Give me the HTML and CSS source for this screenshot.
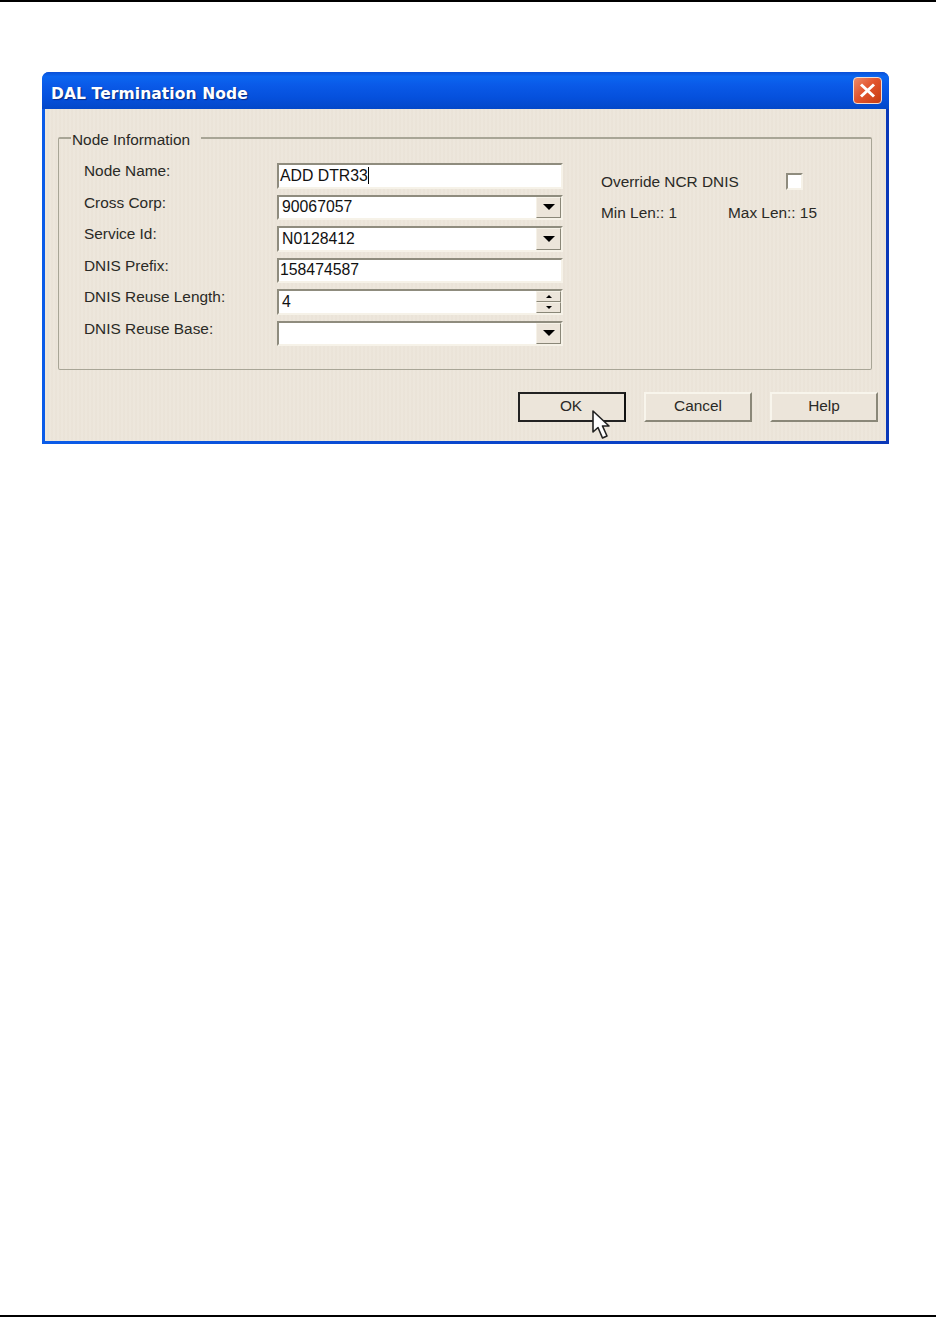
FILE: index.html
```html
<!DOCTYPE html>
<html lang="en">
  <head>
    <meta charset="UTF-8" />
    <title>DAL Termination Node</title>
    <link rel="stylesheet" href="styles.css">
  </head>
  <body>
    <div class="page">
      <div class="dialog">
        <div class="titlebar">
          <span class="title">DAL Termination Node</span>
          <span class="close">
            <svg width="17" height="15" viewBox="0 0 17 15">
              <path d="M2 1.5 L15 13.5 M15 1.5 L2 13.5" stroke="#fff" stroke-width="3" fill="none" />
            </svg>
          </span>
        </div>
        <div class="content">
          <fieldset class="group">
            <legend>Node Information</legend>
            <div class="columns">
              <div class="form">
                <div class="label">Node Name:</div>
                <div class="field">ADD DTR33<span class="caret"></span></div>

                <div class="label">Cross Corp:</div>
                <div class="field combo">90067057<span class="drop"><i class="arrow"></i></span></div>

                <div class="label">Service Id:</div>
                <div class="field combo">N0128412<span class="drop"><i class="arrow"></i></span></div>

                <div class="label">DNIS Prefix:</div>
                <div class="field">158474587</div>

                <div class="label">DNIS Reuse Length:</div>
                <div class="field combo">4
                  <span class="spin">
                    <span class="spin-btn"><i class="arrow-up"></i></span>
                    <span class="spin-btn"><i class="arrow-down"></i></span>
                  </span>
                </div>

                <div class="label">DNIS Reuse Base:</div>
                <div class="field combo"><span class="drop"><i class="arrow"></i></span></div>
              </div>
              <div class="side">
                <div class="side-row">
                  <span class="override">Override NCR DNIS</span>
                  <span class="check"></span>
                </div>
                <div class="side-row lens">
                  <span class="min-len">Min Len:: 1</span>
                  <span>Max Len:: 15</span>
                </div>
              </div>
            </div>
          </fieldset>
          <div class="buttons">
            <div class="btn default">OK</div>
            <div class="btn">Cancel</div>
            <div class="btn">Help</div>
          </div>
          <svg class="cursor" width="20" height="30" viewBox="0 0 20 30">
            <path d="M1 1 V22 L6 17.5 L10.5 28 L15 26 L10.5 16 L17 16 Z" fill="#fff" stroke="#222" stroke-width="1.6" stroke-linejoin="round" />
          </svg>
        </div>
      </div>
    </div>
  </body>
</html>
```

FILE: styles.css
```css
* {
  box-sizing: border-box;
  margin: 0;
  padding: 0;
}

body {
  font-family: "Liberation Sans", Arial, sans-serif;
  background-color: #fff;
  color: #2a2a26;
}

.page {
  height: 1317px;
  border-top: 2px solid #000;
  border-bottom: 2px solid #000;
  padding: 70px 47px 0 42px;
}

.dialog {
  height: 372px;
  display: flex;
  flex-direction: column;
  border-radius: 7px 7px 0 0;
  overflow: hidden;
  background: linear-gradient(to right, #0b5ce8 0%, #0a46cc 50%, #0a38b8 100%);
}

.titlebar {
  height: 37px;
  flex: none;
  display: flex;
  align-items: center;
  justify-content: space-between;
  padding: 0 7px 0 9px;
  background: linear-gradient(to bottom, #0a4fd6 0%, #0b66f0 12%, #0a5ae8 35%, #0550dc 70%, #0348c8 100%);
}

.title {
  padding-top: 6px;
  color: #fff;
  font-family: "DejaVu Sans", sans-serif;
  font-size: 15.5px;
  font-weight: bold;
  letter-spacing: 0.1px;
  text-shadow: 1px 1px 1px #0a2a80;
}

.close {
  width: 29px;
  height: 27px;
  display: flex;
  align-items: center;
  justify-content: center;
  border: 1px solid #f2dcd0;
  border-radius: 4px;
  background: linear-gradient(135deg, #ee8a68 0%, #e2552e 45%, #c63c12 100%);
}

.content {
  position: relative;
  flex: 1;
  margin: 0 3px 3px 3px;
  padding: 18px 14px 0 13px;
  font-size: 15.4px;
  background-color: #ece5da;
  background-image: repeating-linear-gradient(90deg, rgba(255, 255, 255, 0.06) 0, rgba(255, 255, 255, 0.06) 2px, rgba(120, 100, 70, 0.012) 2px, rgba(120, 100, 70, 0.012) 4px);
}

.group {
  height: 243px;
  border: 1px solid #a8a596;
  border-top: 2px solid #a8a596;
  border-radius: 2px;
  padding: 14px 0 0 25px;
}

.group legend {
  margin-left: -13px;
  padding: 4px 11px 0 1px;
  line-height: 18px;
}

.columns {
  display: flex;
}

.form {
  width: 479px;
  display: grid;
  grid-template-columns: 193px 286px;
  grid-auto-rows: 25.5px;
  row-gap: 6px;
}

.label {
  line-height: 18px;
  margin-top: -1px;
  white-space: nowrap;
}

.field {
  position: relative;
  display: flex;
  align-items: center;
  padding-left: 1px;
  background-color: #fff;
  color: #111;
  font-size: 15.8px;
  border: 2px solid;
  border-color: #8f8c7e #f6f2e8 #f6f2e8 #8f8c7e;
  white-space: nowrap;
}

.combo {
  padding-left: 3px;
}

.caret {
  width: 1px;
  height: 17px;
  background-color: #000;
}

.drop {
  position: absolute;
  right: 0;
  top: 0;
  bottom: 0;
  width: 25px;
  display: flex;
  align-items: center;
  justify-content: center;
  background-color: #ece5da;
  border: 1px solid;
  border-color: #f6f2e8 #8a8778 #8a8778 #f6f2e8;
}

.arrow {
  border-left: 6px solid transparent;
  border-right: 6px solid transparent;
  border-top: 6px solid #000;
}

.spin {
  position: absolute;
  right: 0;
  top: 0;
  bottom: 0;
  width: 25px;
  display: flex;
  flex-direction: column;
}

.spin-btn {
  flex: 1;
  display: flex;
  align-items: center;
  justify-content: center;
  background-color: #ece5da;
  border: 1px solid;
  border-color: #f6f2e8 #8a8778 #8a8778 #f6f2e8;
}

.arrow-up {
  border-left: 3px solid transparent;
  border-right: 3px solid transparent;
  border-bottom: 3px solid #000;
}

.arrow-down {
  border-left: 3px solid transparent;
  border-right: 3px solid transparent;
  border-top: 3px solid #000;
}

.side {
  padding: 9px 0 0 38px;
  flex: 1;
}

.side-row {
  display: flex;
  align-items: center;
  height: 20px;
}

.override {
  width: 185px;
}

.check {
  width: 17px;
  height: 17px;
  margin-top: -1px;
  background-color: #fff;
  border: 2px solid;
  border-color: #8f8c7e #f6f2e8 #f6f2e8 #8f8c7e;
}

.lens {
  margin-top: 11px;
}

.min-len {
  width: 127px;
}

.buttons {
  display: flex;
  justify-content: flex-end;
  gap: 18px;
  margin: 22px -6px 0 0;
}

.btn {
  width: 108px;
  height: 30px;
  display: flex;
  align-items: center;
  justify-content: center;
  padding-bottom: 2px;
  background-color: #ece5da;
  border: 2px solid;
  border-color: #f8f5ec #8a8778 #8a8778 #f8f5ec;
}

.default {
  border: 2px solid #222;
  border-right-color: #111;
  padding-right: 2px;
}

.cursor {
  position: absolute;
  left: 547px;
  top: 301px;
}
```
